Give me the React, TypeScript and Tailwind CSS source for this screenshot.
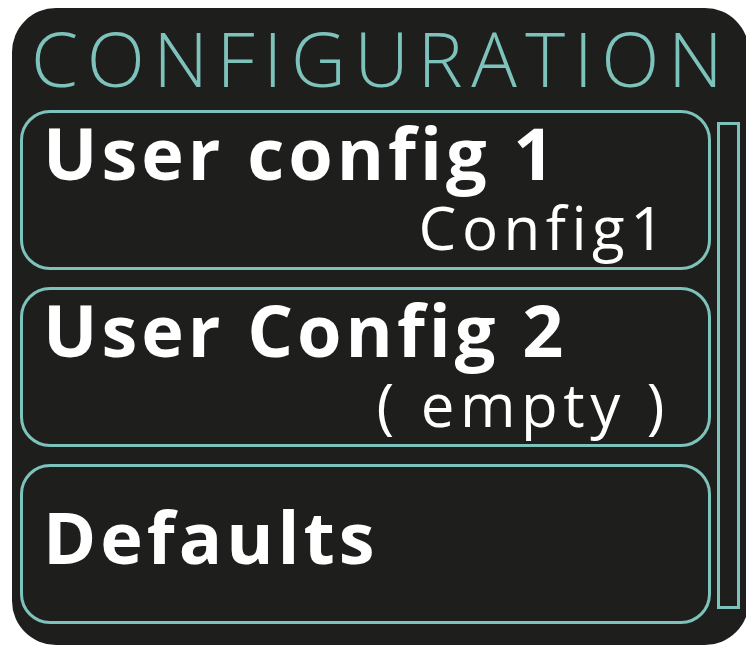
import React from "react";

const configs = [
  { id: 1, name: "User config 1", value: "Config1" },
  { id: 2, name: "User Config 2", value: "( empty )" },
  { id: 3, name: "Defaults", value: "" },
];

export default function App() {
  return (
    <div
      className="h-[648px] w-[746px] overflow-hidden bg-white pl-[12px] pt-[8px]"
      style={{ fontFamily: '"Open Sans", "Noto Sans", sans-serif' }}
    >
      {/* Panel */}
      <div className="h-[637px] w-[737px] rounded-[44px] bg-[#1e1e1c] pl-[8px] pt-[12px]">
        <h1 className="ml-[11px] text-[76px] font-light leading-none tracking-[8.5px] text-[#7dc2bb]">
          CONFIGURATION
        </h1>

        <div className="mt-[14px] flex gap-[6px]">
          {/* Config list */}
          <div className="flex w-[691px] flex-col gap-[17px]">
            {configs.map((c) => (
              <div
                key={c.id}
                className="flex h-[160px] flex-col rounded-[30px] border-[3px] border-[#7dc2bb] pl-[20px] pr-[38px]"
              >
                {c.value ? (
                  <>
                    <div className="pt-[3px] text-[72px] font-bold leading-none tracking-[4px] text-white">
                      {c.name}
                    </div>
                    <div className="mt-[9px] text-right text-[60px] leading-none tracking-[5.5px] text-white">
                      {c.value}
                    </div>
                  </>
                ) : (
                  <div className="pt-[33px] text-[72px] font-bold leading-none tracking-[4px] text-white">
                    {c.name}
                  </div>
                )}
              </div>
            ))}
          </div>

          {/* Scrollbar */}
          <div className="mt-[12px] h-[487px] w-[23px] border-[3px] border-[#7dc2bb]" />
        </div>
      </div>
    </div>
  );
}
